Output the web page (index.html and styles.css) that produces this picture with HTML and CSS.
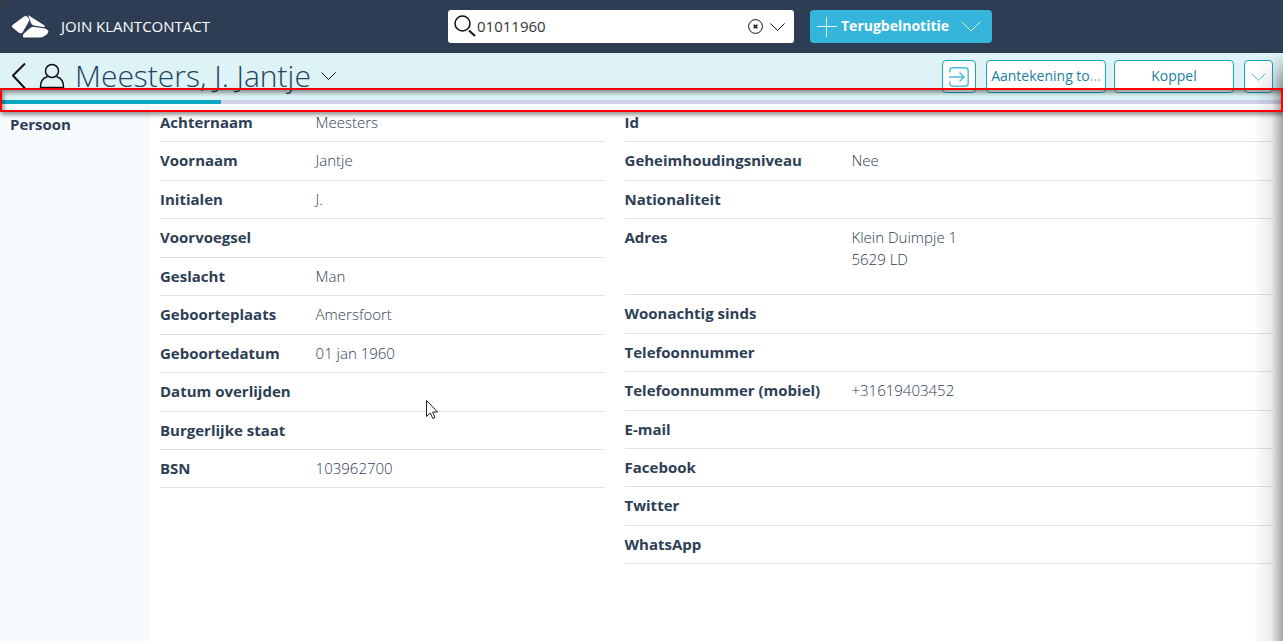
FILE: index.html
```html
<!DOCTYPE html>
<html lang="nl">
<head>
<meta charset="utf-8">
<meta name="viewport" content="width=device-width, initial-scale=1">
<title>JOIN Klantcontact</title>
<link rel="stylesheet" href="styles.css">
</head>
<body>
<div class="app">
  <header class="topbar">
    <div class="brand">
      <svg class="brand-logo" viewBox="0 0 38 24" aria-hidden="true">
        <path d="M1.500 12.500Q0 11.500 1.500 10L13 1.500Q15 .5 16.500 2L18 4Q18.500 5.500 17.500 7L11.500 17.500Q10 19 7.500 17.500Z"/>
        <path d="M17 0L33.500 10.500Q35 12.500 32 12L23 10.500Q21 10 20 8Z"/>
        <path d="M20 12.500Q21.500 11.500 24 12L34 13.500Q37 14.500 37.500 16.500Q37 19 33.500 21Q31.500 22.500 28 22.500H14.500Q11 22.500 12 20.500Q12.500 18.500 15 16.500Z"/>
      </svg>
      <span class="brand-name">JOIN KLANTCONTACT</span>
    </div>
    <form class="search">
      <svg class="search-icon" viewBox="0 0 22 22" aria-hidden="true"><circle cx="8.500" cy="8.500" r="7.500"/><path d="M15 15.500L21 21" stroke-width="2"/></svg>
      <input class="search-input" type="text" value="01011960" aria-label="Zoeken">
      <button class="plain" type="button" aria-label="Wissen">
        <svg class="clear-icon" viewBox="0 0 15 15" aria-hidden="true"><circle cx="7.500" cy="7.500" r="6.900"/><path d="M5.700 5.700L9.300 9.300M9.300 5.700L5.700 9.300" stroke-width="1.500"/></svg>
      </button>
      <button class="plain" type="button" aria-label="Zoekopties">
        <svg class="chevron" viewBox="0 0 15 8" aria-hidden="true"><path d="M.5.5L7.500 7.500L14.500.5"/></svg>
      </button>
    </form>
    <button class="create" type="button">
      <svg class="plus-icon" viewBox="0 0 20 20" aria-hidden="true"><path d="M0 9.500H20M9.500 0V20"/></svg>
      <span class="create-label">Terugbelnotitie</span>
      <svg class="create-chevron" viewBox="0 0 20 11" aria-hidden="true"><path d="M.5.5L10 10L19.500.5"/></svg>
    </button>
  </header>

  <div class="titlebar">
    <button class="plain" type="button" aria-label="Terug">
      <svg class="back-icon" viewBox="0 0 14 26" aria-hidden="true"><path d="M13 .5L1 12.500L13 25.500"/></svg>
    </button>
    <svg class="person-icon" viewBox="0 0 26 26" aria-hidden="true"><circle cx="13" cy="8" r="6.500"/><path d="M8.500 13.500Q1 16 1.500 24.500H24.500Q25 16 17.500 13.500"/></svg>
    <h1 class="title">Meesters, J. Jantje</h1>
    <button class="plain" type="button" aria-label="Meer">
      <svg class="chevron" viewBox="0 0 15 8" aria-hidden="true"><path d="M.5.5L7.500 7.500L14.500.5"/></svg>
    </button>
    <div class="actions">
      <button class="action action-icon" type="button" aria-label="Openen">
        <svg class="enter-icon" viewBox="0 0 20 20" aria-hidden="true"><path d="M.8 5.500V4Q.8.8 4 .8H16Q19.200.8 19.200 4V16Q19.200 19.200 16 19.200H4Q.8 19.200.8 16V14.500M0 10H15M10.500 5.500L15 10L10.500 14.500"/></svg>
      </button>
      <button class="action action-wide" type="button">Aantekening to<span class="dots">...</span></button>
      <button class="action action-wide" type="button">Koppel</button>
      <button class="action action-more" type="button" aria-label="Meer acties">
        <svg class="chevron" viewBox="0 0 15 8" aria-hidden="true"><path d="M.5.5L7.500 7.500L14.500.5"/></svg>
      </button>
    </div>
    <div class="highlight"></div>
  </div>
  <div class="progress"><div class="progress-fill" style="width:17.2%"></div></div>

  <div class="body">
    <nav class="sidebar"><a class="sidebar-link" href="#persoon">Persoon</a></nav>
    <main class="details" id="persoon">
      <dl class="fields">
        <div class="field"><dt>Achternaam</dt><dd>Meesters</dd></div>
        <div class="field"><dt>Voornaam</dt><dd>Jantje</dd></div>
        <div class="field"><dt>Initialen</dt><dd>J.</dd></div>
        <div class="field"><dt>Voorvoegsel</dt><dd></dd></div>
        <div class="field"><dt>Geslacht</dt><dd>Man</dd></div>
        <div class="field"><dt>Geboorteplaats</dt><dd>Amersfoort</dd></div>
        <div class="field"><dt>Geboortedatum</dt><dd>01 jan 1960</dd></div>
        <div class="field"><dt>Datum overlijden</dt><dd></dd></div>
        <div class="field"><dt>Burgerlijke staat</dt><dd></dd></div>
        <div class="field"><dt>BSN</dt><dd>103962700</dd></div>
      </dl>
      <dl class="fields">
        <div class="field"><dt>Id</dt><dd></dd></div>
        <div class="field"><dt>Geheimhoudingsniveau</dt><dd>Nee</dd></div>
        <div class="field"><dt>Nationaliteit</dt><dd></dd></div>
        <div class="field field-tall"><dt>Adres</dt><dd>Klein Duimpje 1<br>5629 LD</dd></div>
        <div class="field"><dt>Woonachtig sinds</dt><dd></dd></div>
        <div class="field"><dt>Telefoonnummer</dt><dd></dd></div>
        <div class="field"><dt>Telefoonnummer (mobiel)</dt><dd>+31619403452</dd></div>
        <div class="field"><dt>E-mail</dt><dd></dd></div>
        <div class="field"><dt>Facebook</dt><dd></dd></div>
        <div class="field"><dt>Twitter</dt><dd></dd></div>
        <div class="field"><dt>WhatsApp</dt><dd></dd></div>
      </dl>
    </main>
  </div>
  <div class="edge-shadow"></div>
  <svg class="pointer" viewBox="0 0 12 20" aria-hidden="true"><path d="M.5.5V16.500L4.300 13L6.800 18.500L9 17.500L6.700 12H11.500Z"/></svg>
</div>
</body>
</html>
```
FILE: styles.css
```css
* { box-sizing: border-box; }

body {
  margin: 0;
  background: #fff;
  color: #2d3e55;
  font: 15px/1.43 "Open Sans", sans-serif;
}

button, input { font: inherit; color: inherit; }

svg {
  display: block;
  flex: none;
  fill: none;
  stroke: #111;
}

.app {
  position: relative;
  display: flex;
  flex-direction: column;
  min-height: 100vh;
  overflow: hidden;
  background: #fff;
}
/* Dark page corner behind the rounded top bar */
.app::before {
  content: "";
  position: absolute;
  width: 8px;
  height: 8px;
  background: #3c3c3c;
}

.plain {
  padding: 0;
  border: 0;
  background: none;
}

.chevron { width: 15px; height: 8px; }

/* Top bar */
.topbar {
  position: relative;
  display: flex;
  align-items: center;
  height: 53px;
  padding-left: 11px;
  background: #2d3d54;
  border-top-left-radius: 8px;
}

.brand {
  display: flex;
  align-items: center;
  gap: 12px;
  width: 437px;
}
.brand-logo { width: 38px; height: 24px; fill: #fff; stroke: none; }
.brand-name { color: #fff; }

.search {
  display: flex;
  align-items: center;
  width: 346px;
  height: 33px;
  margin-right: 16px;
  padding: 0 9px 0 6px;
  gap: 7px;
  background: #fff;
  border-radius: 3px;
}
.search-icon { width: 22px; height: 22px; margin-bottom: 2px; stroke-width: 1.500; }
.search-input {
  flex: 1;
  min-width: 0;
  margin-left: -6px;
  padding: 0;
  border: 0;
  outline: 0;
  color: #333;
}
.clear-icon { width: 15px; height: 15px; }

.create {
  display: flex;
  align-items: center;
  height: 33px;
  width: 182px;
  padding: 0 11px 0 7px;
  border: 0;
  border-radius: 4px;
  background: #36b5dc;
  color: #fff;
  font-size: 14px;
  font-weight: 700;
}
.create svg { stroke: #e4f6fb; }
.plus-icon { width: 20px; height: 20px; margin-right: 4px; }
.create-chevron { width: 20px; height: 11px; margin-left: auto; }

/* Title bar */
.titlebar {
  position: relative;
  display: flex;
  align-items: center;
  height: 47px;
  padding: 0 10px 2px 12px;
  background: #def3f6;
}
.back-icon { width: 14px; height: 26px; stroke-width: 2; }
.person-icon { width: 26px; height: 26px; margin: 0 10px 0 13px; stroke-width: 1.500; }
.title {
  margin: 0 10px 0 0;
  font-size: 30px;
  font-weight: 300;
  line-height: 42px;
  color: #21445f;
}

.actions {
  display: flex;
  padding-top: 2px;
  margin-left: auto;
}
.action {
  height: 33px;
  padding: 0 4px;
  border: 1px solid #17a5c0;
  border-radius: 4px;
  background: #fff;
  color: #19809f;
  font-size: 14px;
}
.action svg { margin: 0 auto; stroke: #51bfdf; }
.action-icon { width: 34px; margin-right: 10px; }
.action-wide {
  width: 120px;
  margin-right: 8px;
  padding: 0;
  white-space: nowrap;
}
.dots { color: #9aaebb; }
.action-more { width: 29px; margin-left: 2px; }
.enter-icon { width: 20px; height: 20px; stroke-width: 1.500; }

.progress { height: 4px; background: #cfd2ea; }
.progress-fill { height: 100%; background: #09a7c2; }

/* Red outline over the progress bar */
.highlight {
  position: absolute;
  z-index: 2;
  top: 35px;
  left: 0;
  right: 0;
  height: 24px;
  border: 2px solid #f00;
  box-shadow: 1px 3px 4px rgba(0, 0, 0, .4), inset 2px 3px 4px rgba(0, 0, 0, .4);
}

/* Content */
.body { display: flex; flex: 1; }
.sidebar {
  flex: none;
  width: 150px;
  padding: 10px;
  background: #f5faff;
}
.sidebar-link {
  color: inherit;
  font-weight: 700;
  text-decoration: none;
}

.details {
  display: grid;
  grid-template-columns: 41fr 59fr;
  align-items: start;
  flex: 1;
}
.fields { margin: 0; padding: 0 10px; }
.field {
  display: grid;
  grid-template-columns: 35% 1fr;
  padding: 8px 0;
  border-bottom: 1px solid #e1e2e4;
}
.field-tall { padding-bottom: 24px; }
dt { font-weight: 700; }
dd { margin: 0; font-weight: 300; }

.edge-shadow {
  position: absolute;
  top: 53px;
  right: 0;
  bottom: 0;
  width: 30px;
  background: linear-gradient(to right, transparent, rgba(0, 0, 0, .08) 60%, rgba(0, 0, 0, .35));
  mask-image: linear-gradient(transparent, #000 30px);
}

.pointer {
  position: absolute;
  top: 400px;
  left: 426px;
  width: 12px;
  height: 20px;
  fill: #fff;
  stroke: #1e1e2c;
}
```
